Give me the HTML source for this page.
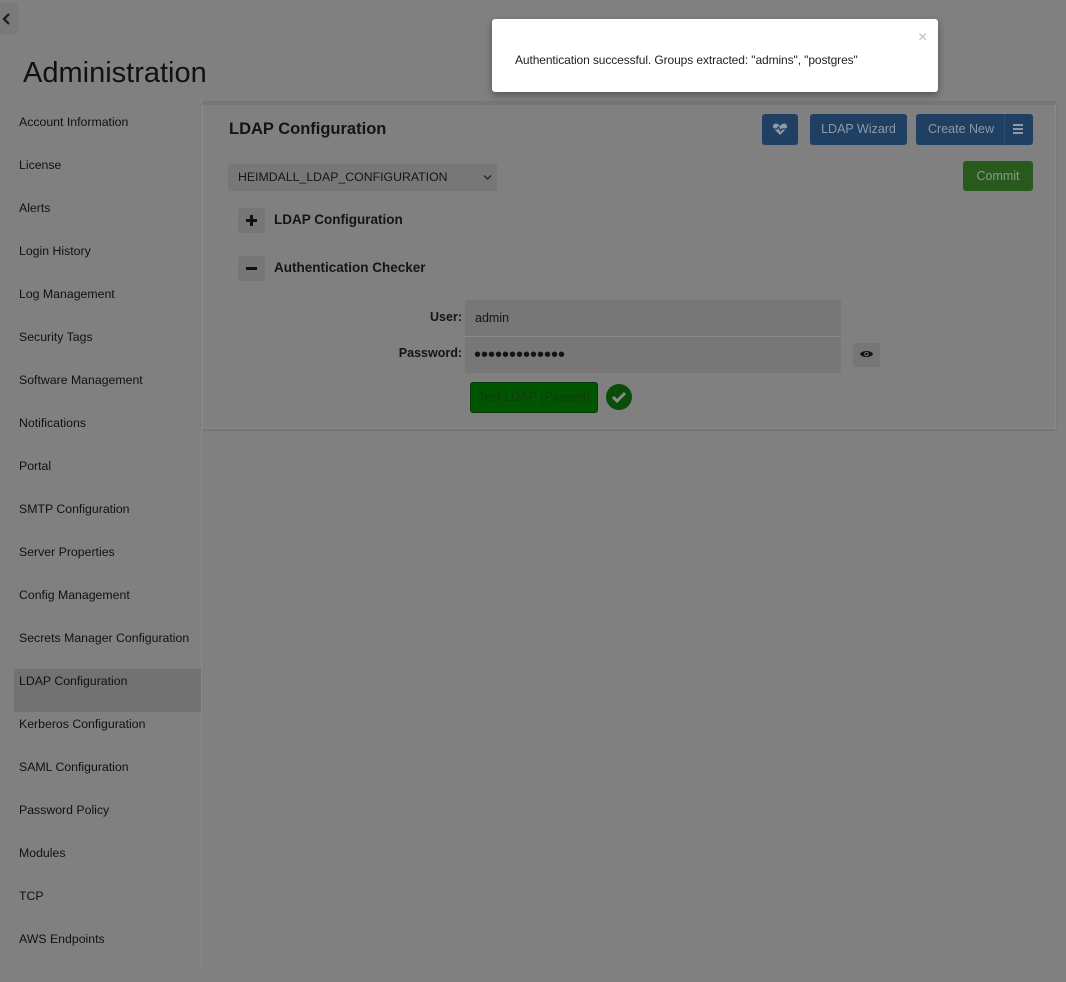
<!DOCTYPE html>
<html><head><meta charset="utf-8"><style>
*{box-sizing:border-box;margin:0;padding:0}
body{width:1066px;height:982px;background:#808080;font-family:"Liberation Sans",sans-serif;color:#111;position:relative;overflow:hidden}
.a{position:absolute}
.side div{position:absolute;left:14px;width:187px;height:43px;padding-left:5px;line-height:22px;font-size:12.3px;color:#111}
.btn{position:absolute;background:#1f3f63;border-radius:3px;color:#8d9aa8;font-size:12.5px;text-align:center}
</style></head><body>
<div class="a" style="left:0;top:3px;width:18px;height:32px;background:#7a7a7a;border-radius:0 3px 3px 0"></div>
<svg class="a" style="left:2px;top:13px" width="10" height="12" viewBox="0 0 10 12"><path d="M7 1L2 6l5 5" stroke="#222" stroke-width="2.4" fill="none"/></svg>
<div class="a" style="left:23px;top:57px;font-size:29px;color:#111">Administration</div>
<div class="a" style="left:201px;top:100px;width:1px;height:870px;background:#8a8a8a"></div>
<div class="side">
<div style="top:111px">Account Information</div>
<div style="top:154px">License</div>
<div style="top:197px">Alerts</div>
<div style="top:240px">Login History</div>
<div style="top:283px">Log Management</div>
<div style="top:326px">Security Tags</div>
<div style="top:369px">Software Management</div>
<div style="top:412px">Notifications</div>
<div style="top:455px">Portal</div>
<div style="top:498px">SMTP Configuration</div>
<div style="top:541px">Server Properties</div>
<div style="top:584px">Config Management</div>
<div style="top:627px">Secrets Manager Configuration</div>
<div style="top:669px;background:#727272;padding-top:1px">LDAP Configuration</div>
<div style="top:713px">Kerberos Configuration</div>
<div style="top:756px">SAML Configuration</div>
<div style="top:799px">Password Policy</div>
<div style="top:842px">Modules</div>
<div style="top:885px">TCP</div>
<div style="top:928px">AWS Endpoints</div>
</div>
<div class="a" style="left:202px;top:101px;width:854px;height:328px;background:#808080;border:1px solid #8a8a8a;border-top:4px solid #767676;box-shadow:0 1px 2px rgba(0,0,0,.15)"></div>
<div class="a" style="left:229px;top:120px;font-size:16.5px;font-weight:bold;color:#151515">LDAP Configuration</div>
<div class="btn" style="left:762px;top:114px;width:36px;height:31px"></div>
<svg class="a" style="left:772px;top:122px" width="16" height="14" viewBox="0 0 16 14"><path d="M8 13L2 7C0 5 1 1.5 4 1.5c2 0 3 1.5 4 2.5 1-1 2-2.5 4-2.5 3 0 4 3.5 2 5.5z" fill="#8d9aa8"/><path d="M1 7h4l1.5-2 2 4 1.5-2h5" stroke="#1f3f63" stroke-width="1.3" fill="none"/></svg>
<div class="btn" style="left:810px;top:114px;width:97px;height:31px;line-height:31px">LDAP Wizard</div>
<div class="btn" style="left:916px;top:114px;width:117px;height:31px;line-height:31px;text-align:left;padding-left:12px">Create New</div>
<div class="a" style="left:1004px;top:114px;width:1px;height:31px;background:#2e4d70"></div>
<div class="a" style="left:1013px;top:124px;width:10px;height:2px;background:#8d9aa8;box-shadow:0 4px 0 #8d9aa8,0 8px 0 #8d9aa8"></div>
<div class="a" style="left:963px;top:161px;width:70px;height:30px;background:#295a1d;border-radius:3px;color:#8a9a86;font-size:12.5px;line-height:30px;text-align:center">Commit</div>
<div class="a" style="left:228px;top:164px;width:269px;height:27px;background:#777;font-size:12.3px;line-height:27px;padding-left:10px;color:#151515">HEIMDALL_LDAP_CONFIGURATION</div>
<svg class="a" style="left:483px;top:174px" width="9" height="7" viewBox="0 0 9 7"><path d="M1 1.5l3.5 3.5 3.5-3.5" stroke="#222" stroke-width="1.3" fill="none"/></svg>
<div class="a" style="left:238px;top:208px;width:27px;height:25px;background:#767676;border-radius:2px"></div>
<div class="a" style="left:246px;top:219px;width:11px;height:3px;background:#111"></div>
<div class="a" style="left:250px;top:215px;width:3px;height:11px;background:#111"></div>
<div class="a" style="left:274px;top:212px;font-size:13.5px;font-weight:bold;color:#151515">LDAP Configuration</div>
<div class="a" style="left:238px;top:256px;width:27px;height:25px;background:#767676;border-radius:2px"></div>
<div class="a" style="left:246px;top:267px;width:11px;height:3px;background:#111"></div>
<div class="a" style="left:274px;top:260px;font-size:13.5px;font-weight:bold;color:#151515">Authentication Checker</div>
<div class="a" style="left:380px;top:310px;width:82px;text-align:right;font-size:12.5px;font-weight:bold;color:#151515">User:</div>
<div class="a" style="left:465px;top:300px;width:376px;height:36px;background:#777;font-size:12.5px;line-height:36px;padding-left:10px;color:#151515">admin</div>
<div class="a" style="left:465px;top:336px;width:376px;height:1px;background:#8a8a8a"></div>
<div class="a" style="left:380px;top:346px;width:82px;text-align:right;font-size:12.5px;font-weight:bold;color:#151515">Password:</div>
<div class="a" style="left:465px;top:337px;width:376px;height:36px;background:#777;font-size:20px;line-height:36px;padding-left:9px;color:#151515">•••••••••••••</div>
<div class="a" style="left:853px;top:343px;width:27px;height:24px;background:#767676;border-radius:2px"></div>
<svg class="a" style="left:859px;top:348px" width="15" height="12" viewBox="0 0 15 12"><path d="M1 6c2-4 11-4 13 0-2 4-11 4-13 0z" fill="#111"/><circle cx="7.5" cy="6" r="2.3" fill="#767676"/><circle cx="7.5" cy="6" r="1.2" fill="#111"/></svg>
<div class="a" style="left:470px;top:382px;width:128px;height:31px;background:#005500;border:1px solid #0a3a0a;border-radius:3px;color:#123a12;font-size:12.5px;line-height:29px;text-align:center">Test LDAP (Passed)</div>
<div class="a" style="left:606px;top:384px;width:26px;height:26px;border-radius:50%;background:#0a4d0a"></div>
<svg class="a" style="left:611px;top:390px" width="16" height="14" viewBox="0 0 16 14"><path d="M2 7l4 4 8-8" stroke="#8a8a8a" stroke-width="3" fill="none"/></svg>
<div class="a" style="left:492px;top:19px;width:446px;height:73px;background:#fff;border-radius:3px;box-shadow:0 3px 8px rgba(0,0,0,.35)"></div>
<div class="a" style="left:515px;top:53px;font-size:12px;color:#222;letter-spacing:-0.1px">Authentication successful. Groups extracted: "admins", "postgres"</div>
<div class="a" style="left:918px;top:29px;font-size:16px;color:#bbb">×</div>
</body></html>
